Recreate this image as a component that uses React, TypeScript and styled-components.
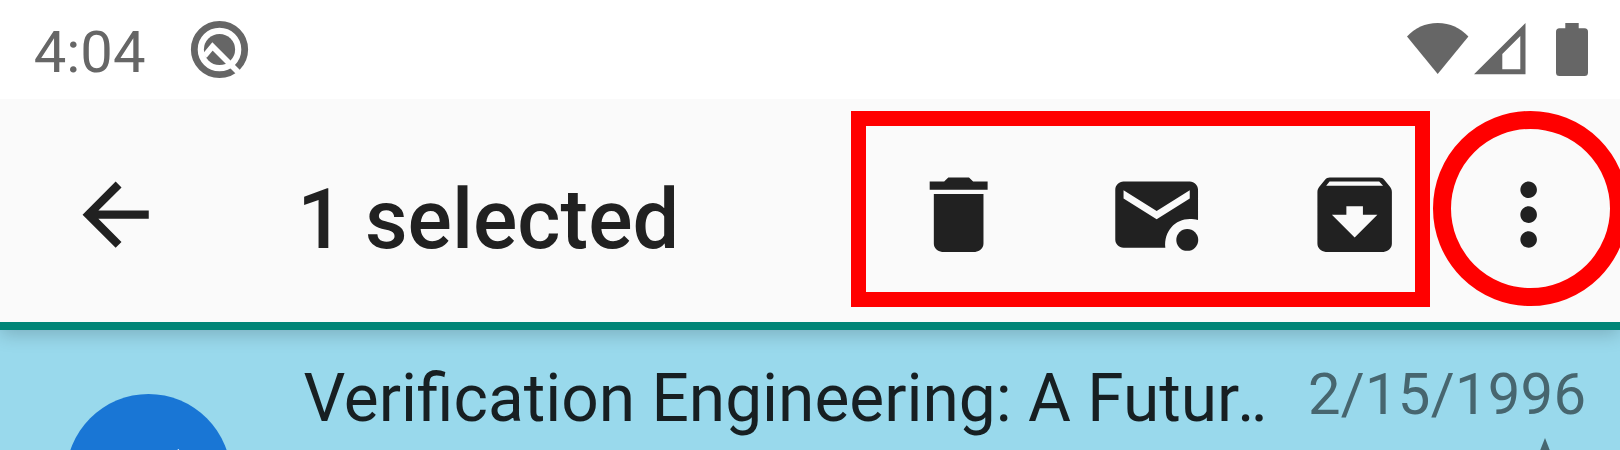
import React from 'react';
import styled, { createGlobalStyle } from 'styled-components';

const GlobalStyle = createGlobalStyle`
  html, body { margin: 0; padding: 0; overflow: hidden; background: #fff; }
  * { box-sizing: border-box; }
`;

const Screen = styled.div`
  position: relative;
  width: 1620px;
  height: 450px;
  overflow: hidden;
  display: flex;
  flex-direction: column;
  font-family: Roboto, 'Liberation Sans', sans-serif;
`;

const StatusBar = styled.header`
  position: relative;
  z-index: 2;
  flex: none;
  height: 99px;
  display: flex;
  justify-content: space-between;
  padding: 0 32.5px 0 33.7px;
  background: #fff;
  color: #666;
`;

const StatusGroup = styled.div`
  display: flex;
  align-items: flex-start;
`;

const Clock = styled.span`
  width: 149.3px;
  padding-top: 18px;
  font-size: 58px;
  line-height: 68px;
`;

const Glyph = styled.svg<{ $top?: number; $left?: number }>`
  display: block;
  flex: none;
  fill: currentColor;
  margin-top: ${(p) => p.$top ?? 0}px;
  margin-left: ${(p) => p.$left ?? 0}px;
`;

const Toolbar = styled.nav`
  position: relative;
  z-index: 1;
  flex: none;
  height: 231px;
  padding: 65.7px 42px 0 66px;
  display: flex;
  align-items: flex-start;
  background: #fafafa;
  border-bottom: 8px solid #008577;
  color: #212121;
  box-shadow: 0 4px 18px rgba(0, 0, 0, 0.2);
`;

const Title = styled.h1`
  flex: 1;
  margin: 6px 0 0 132px;
  font-size: 82.8px;
  font-weight: 500;
  line-height: 97px;
  white-space: nowrap;
`;

const IconButton = styled.button<{ $gap?: number }>`
  flex: none;
  width: 99.3px;
  height: 99.3px;
  margin: 0 ${(p) => p.$gap ?? 0}px 0 0;
  padding: 0;
  border: 0;
  background: none;
  color: inherit;
`;

const MessageRow = styled.article`
  flex: 1;
  display: flex;
  align-items: flex-start;
  padding: 0 33px 0 65.8px;
  background: #99d9ec;
`;

const Avatar = styled.div`
  flex: none;
  display: flex;
  justify-content: center;
  width: 165.4px;
  height: 165.4px;
  margin-top: 64px;
  border-radius: 50%;
  background: #1976d5;
  color: #fff;
`;

const Subject = styled.div`
  flex: 1;
  margin: 30.4px 0 0 72.2px;
  color: #171f22;
  font-size: 65.8px;
  line-height: 78px;
  white-space: nowrap;
`;

const Ellipsis = styled.span`
  margin-left: -2px;
  letter-spacing: -4px;
`;

const Meta = styled.div`
  flex: none;
  width: 279px;
  display: flex;
  flex-direction: column;
  color: #47666f;
`;

const DateText = styled.time`
  margin-top: 30.4px;
  font-size: 58px;
  letter-spacing: 0.25px;
  line-height: 68px;
  white-space: nowrap;
`;

const Frame = styled.div`
  position: absolute;
  z-index: 2;
  left: 851px;
  top: 111px;
  width: 579px;
  height: 196px;
  border: 15px solid #f00;
`;

const Ring = styled.div`
  position: absolute;
  z-index: 2;
  left: 1433.3px;
  top: 111px;
  width: 195px;
  height: 195px;
  border: 18.3px solid #f00;
  border-radius: 50%;
`;

const Icon = ({ d, children }: { d?: string; children?: React.ReactNode }) => (
  <Glyph width="99.3" height="99.3" viewBox="0 0 24 24">
    {d && <path d={d} />}
    {children}
  </Glyph>
);

export default function App() {
  return (
    <Screen>
      <GlobalStyle />
      <StatusBar>
        <StatusGroup>
          <Clock>4:04</Clock>
          <Glyph width="72" height="70" viewBox="-1 0 72 70" $top={15}>
            <circle
              cx="35.5"
              cy="34.5"
              r="25.2"
              fill="none"
              stroke="currentColor"
              strokeWidth="6.8"
            />
            <circle cx="35.5" cy="34.5" r="15.6" />
            <path d="M20.5 41L28.5 31.5L56 59" fill="none" stroke="#fff" strokeWidth="5.6" />
          </Glyph>
        </StatusGroup>
        <StatusGroup>
          <Glyph width="62" height="52" viewBox="0 0 62 52" $top={23}>
            <path d="M0 13.5C8 5 18 0 30.7 0S53 5 61.4 13.5L30.7 51Z" />
          </Glyph>
          <Glyph width="52" height="52" viewBox="0 0 52 52" $top={23} $left={4.5}>
            <path
              fillRule="evenodd"
              d="M0 51.3L51.5 0V51.3ZM28.3 46.3H46.3V13L28.3 31Z"
            />
          </Glyph>
          <Glyph width="32" height="54" viewBox="0 0 32 54" $top={23} $left={30}>
            <path d="M9.3 0H22.7V5.3H28.5Q32 5.3 32 8.8V49.5Q32 53 28.5 53H3.5Q0 53 0 49.5V8.8Q0 5.3 3.5 5.3H9.3Z" />
          </Glyph>
        </StatusGroup>
      </StatusBar>

      <Toolbar>
        <IconButton aria-label="Back">
          <Icon d="M20 11H7.83l5.59-5.59L12 4l-8 8 8 8 1.41-1.41L7.83 13H20v-2z" />
        </IconButton>
        <Title>1 selected</Title>
        <IconButton aria-label="Delete" $gap={98.7}>
          <Icon d="M6 19c0 1.1.9 2 2 2h8c1.1 0 2-.9 2-2V7H6v12zM19 4h-3.5l-1-1h-5l-1 1H5v2h14V4z" />
        </IconButton>
        <IconButton aria-label="Mark unread" $gap={98.8}>
          <Icon>
            <path d="M20 4H4c-1.1 0-2 .9-2 2v12c0 1.1.9 2 2 2h10.1C13.7 16 16.5 13.05 20 13.05c.7 0 1.35.07 2 .27V6c0-1.1-.9-2-2-2zm0 4.1l-8 5-8-5V6.1l8 5 8-5z" />
            <circle cx="19.4" cy="18.1" r="2.65" />
          </Icon>
        </IconButton>
        <IconButton aria-label="Archive" $gap={74.5}>
          <Icon d="M20.54 5.23l-1.39-1.68C18.88 3.21 18.47 3 18 3H6c-.47 0-.88.21-1.16.55L3.46 5.23C3.17 5.57 3 6.02 3 6.5V19c0 1.1.9 2 2 2h14c1.1 0 2-.9 2-2V6.5c0-.48-.17-.93-.46-1.27zM12 17.5L6.5 12H10v-2h4v2h3.5L12 17.5zM5.12 5l.81-1h12l.94 1H5.12z" />
        </IconButton>
        <IconButton aria-label="More options">
          <Icon d="M12 8c1.1 0 2-.9 2-2s-.9-2-2-2-2 .9-2 2 .9 2 2 2zm0 2c-1.1 0-2 .9-2 2s.9 2 2 2 2-.9 2-2-.9-2-2-2zm0 6c-1.1 0-2 .9-2 2s.9 2 2 2 2-.9 2-2-.9-2-2-2z" />
        </IconButton>
      </Toolbar>

      <MessageRow>
        <Avatar>
          <Glyph width="82" height="66" viewBox="0 0 82 66" $top={54}>
            <path d="M27 47L8 28L1 35L27 61L78 8L71.3 1Z" />
          </Glyph>
        </Avatar>
        <Subject>
          Verification Engineering: A Futur<Ellipsis>..</Ellipsis>
        </Subject>
        <Meta>
          <DateText>2/15/1996</DateText>
          <Glyph width="84" height="80" viewBox="0 0 84 80" $top={10} $left={195}>
            <path d="M42 0L53 28L84 31L62 50L69 79L42 64L15 79L22 50L0 31L31 28Z" />
          </Glyph>
        </Meta>
      </MessageRow>

      <Frame />
      <Ring />
    </Screen>
  );
}
